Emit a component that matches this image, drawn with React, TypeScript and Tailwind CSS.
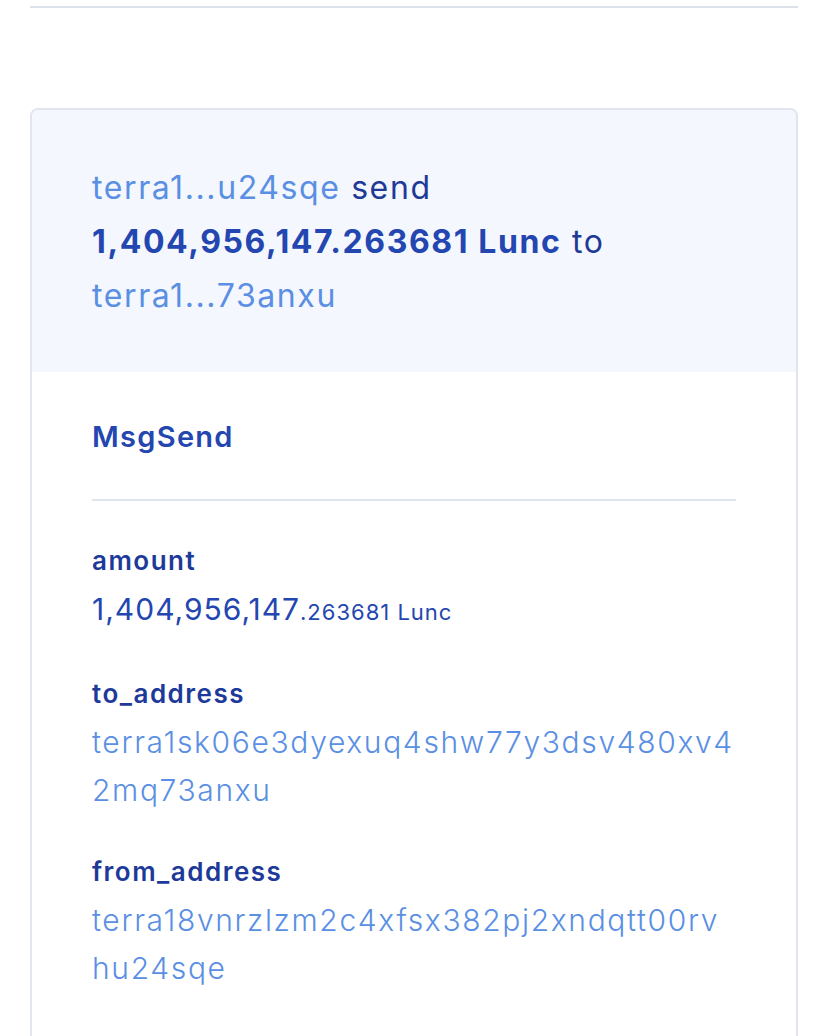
import React from "react";

const fields = [
  { label: "amount", kind: "amount" },
  { label: "to_address", value: "terra1sk06e3dyexuq4shw77y3dsv480xv42mq73anxu" },
  { label: "from_address", value: "terra18vnrzlzm2c4xfsx382pj2xndqtt00rvhu24sqe" },
];

export default function App() {
  return (
    <div className="min-h-screen bg-white font-['Inter','Liberation_Sans',sans-serif]">
      <div className="px-[30px] pt-[6px]">
        <div className="h-[2px] bg-[#dde1ea]" />

        {/* Tx message card */}
        <div className="mt-[100px] overflow-hidden rounded-lg border-2 border-[#e0e5ef]">
          <div className="bg-[#f4f7fd] px-[60px] pt-[51px] pb-[49px] text-[32px] leading-[54px] tracking-[1.6px] text-[#1e3a96]">
            <span className="text-[#5a8fe3]">terra1...u24sqe</span> send{" "}
            <span className="font-bold text-[#2346b0]">1,404,956,147.263681 Lunc</span> to{" "}
            <span className="text-[#5a8fe3]">terra1...73anxu</span>
          </div>

          <div className="px-[60px] pt-[45px] pb-[60px]">
            <div className="text-[29px] leading-[40px] font-semibold tracking-[1.3px] text-[#2346b0]">MsgSend</div>
            <div className="mt-[42px] h-[2px] bg-[#e0e4ee]" />

            <div className="mt-[36px] flex flex-col gap-[34px]">
              {fields.map((f) => (
                <div key={f.label}>
                  <div className="text-[26px] leading-[48px] font-semibold tracking-[1.5px] text-[#1d3a9a]">{f.label}</div>
                  {f.kind === "amount" ? (
                    <div className="text-[30px] leading-[48px] tracking-[1px] text-[#2346b0]">
                      1,404,956,147<span className="text-[22px]">.263681 Lunc</span>
                    </div>
                  ) : (
                    <div className="break-all text-[30px] leading-[48px] font-light tracking-[1.65px] text-[#5a8fe3]">{f.value}</div>
                  )}
                </div>
              ))}
            </div>
          </div>
        </div>
      </div>
    </div>
  );
}
